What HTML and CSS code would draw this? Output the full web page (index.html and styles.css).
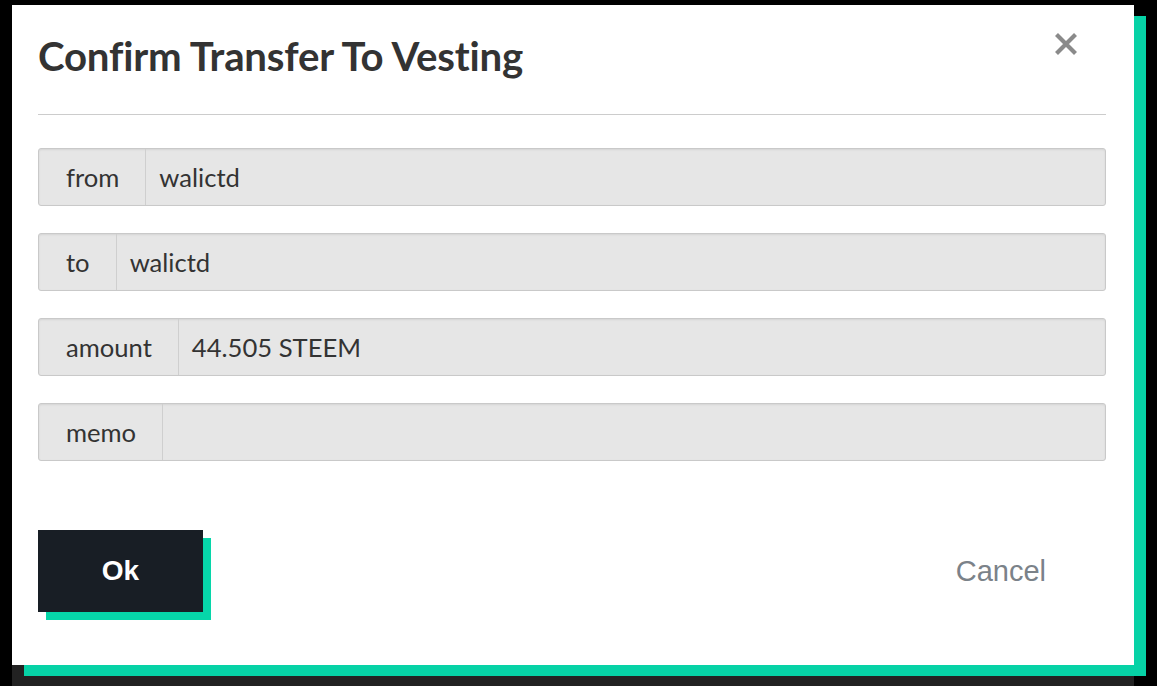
FILE: index.html
```html
<!DOCTYPE html>
<html>
<head>
<meta charset="utf-8">
<link rel="stylesheet" href="styles.css">
</head>
<body>
<div class="modal">
  <div class="header">
    <h2 class="title">Confirm Transfer To Vesting</h2>
    <button class="close" aria-label="Close">
      <svg width="24" height="22" viewBox="0 0 24 22"><path d="M2.5 1.5 L21.5 20.5 M21.5 1.5 L2.5 20.5" stroke="#8a8a8a" stroke-width="4.2" stroke-linecap="butt"/></svg>
    </button>
  </div>
  <hr class="rule">
  <div class="fields">
    <div class="field"><span class="label">from</span><span class="value">walictd</span></div>
    <div class="field"><span class="label">to</span><span class="value">walictd</span></div>
    <div class="field"><span class="label">amount</span><span class="value">44.505 STEEM</span></div>
    <div class="field"><span class="label">memo</span><span class="value"></span></div>
  </div>
  <div class="actions">
    <button class="ok">Ok</button>
    <button class="cancel">Cancel</button>
  </div>
</div>
</body>
</html>
```
FILE: styles.css
```css
html, body { margin: 0; padding: 0; }
body {
  width: 1157px;
  height: 686px;
  overflow: hidden;
  background: linear-gradient(#222, #222) 12px 665px / 1122px 21px no-repeat, #000;
  font-family: "Lato", "Liberation Sans", sans-serif;
}
.modal {
  box-sizing: border-box;
  margin: 5px 0 0 12px;
  width: 1122px;
  height: 660px;
  background: #fff;
  box-shadow: 12px 11px 0 #06d2a6;
  padding: 0 28px 0 26px;
  display: flex;
  flex-direction: column;
}
.header {
  display: flex;
  justify-content: space-between;
  align-items: flex-start;
  height: 109px;
}
.title {
  margin: 26px 0 0 0;
  font-size: 40.2px;
  font-weight: 700;
  color: #333;
  letter-spacing: -0.2px;
}
.close {
  margin: 28px 28px 0 0;
  padding: 0;
  border: 0;
  background: none;
  display: flex;
}
.rule {
  margin: 0;
  border: 0;
  border-top: 1px solid #ccc;
}
.fields {
  margin-top: 33px;
  display: flex;
  flex-direction: column;
  gap: 27px;
}
.field {
  display: flex;
  height: 58px;
  box-sizing: border-box;
  border: 1px solid #c9c9c9;
  border-radius: 3px;
  background: #e6e6e6;
  box-shadow: inset 0 1px 2px rgba(0,0,0,0.08);
  font-size: 25.6px;
  color: #333;
}
.label {
  display: flex;
  align-items: center;
  padding: 0 26px 0 27px;
  border-right: 1px solid #cfcfcf;
}
.value {
  display: flex;
  align-items: center;
  padding: 0 13px;
  flex: 1;
}
.actions {
  margin-top: 69px;
  display: flex;
  justify-content: space-between;
  align-items: center;
}
.ok {
  width: 165px;
  height: 82px;
  border: 0;
  background: #181e25;
  color: #fff;
  font-family: "Liberation Sans", Arial, sans-serif;
  font-weight: 700;
  font-size: 28px;
  box-shadow: 8px 8px 0 #06d6a9;
  padding: 0;
}
.cancel {
  margin-right: 60px;
  border: 0;
  background: none;
  padding: 0;
  color: #7b8289;
  font-family: "Liberation Sans", Arial, sans-serif;
  font-size: 29px;
}
```
